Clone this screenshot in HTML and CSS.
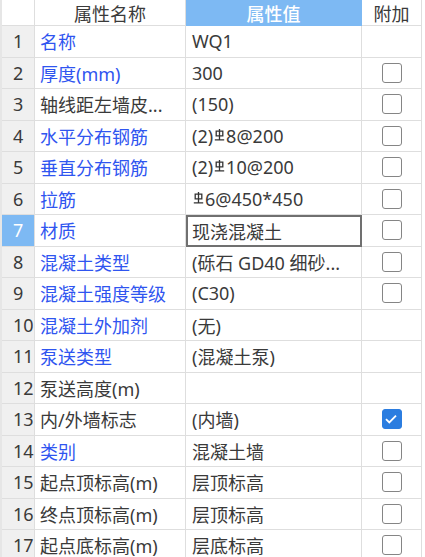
FILE: index.html
```html
<!DOCTYPE html>
<html lang="zh">
<head>
<meta charset="utf-8">
<title>属性</title>
<link rel="stylesheet" href="styles.css">
</head>
<body>
<div class="grid">
  <div class="h num-h"></div>
  <div class="h">属性名称</div>
  <div class="h val-h">属性值</div>
  <div class="h add-h">附加</div>

  <div class="n">1</div><div class="c blue">名称</div><div class="v">WQ1</div><div class="a"></div>
  <div class="n">2</div><div class="c blue">厚度(mm)</div><div class="v">300</div><div class="a"><span class="cb"></span></div>
  <div class="n">3</div><div class="c">轴线距左墙皮...</div><div class="v">(150)</div><div class="a"><span class="cb"></span></div>
  <div class="n">4</div><div class="c blue">水平分布钢筋</div><div class="v">(2)<svg class="bar" viewBox="0 0 11 12" width="11" height="12"><path d="M2.2 2.2h6.6v4.6H2.2zM5.5 0v10.5M0.8 10.8h9.4" fill="none" stroke="#333" stroke-width="1.3"/></svg>8@200</div><div class="a"><span class="cb"></span></div>
  <div class="n">5</div><div class="c blue">垂直分布钢筋</div><div class="v">(2)<svg class="bar" viewBox="0 0 11 12" width="11" height="12"><path d="M2.2 2.2h6.6v4.6H2.2zM5.5 0v10.5M0.8 10.8h9.4" fill="none" stroke="#333" stroke-width="1.3"/></svg>10@200</div><div class="a"><span class="cb"></span></div>
  <div class="n">6</div><div class="c blue">拉筋</div><div class="v"><svg class="bar" viewBox="0 0 11 12" width="11" height="12"><path d="M2.2 2.2h6.6v4.6H2.2zM5.5 0v10.5M0.8 10.8h9.4" fill="none" stroke="#333" stroke-width="1.3"/></svg>6@450*450</div><div class="a"><span class="cb"></span></div>
  <div class="n sel">7</div><div class="c blue">材质</div><div class="v edit">现浇混凝土</div><div class="a"><span class="cb"></span></div>
  <div class="n">8</div><div class="c blue">混凝土类型</div><div class="v">(砾石 GD40 细砂...</div><div class="a"><span class="cb"></span></div>
  <div class="n">9</div><div class="c blue">混凝土强度等级</div><div class="v">(C30)</div><div class="a"><span class="cb"></span></div>
  <div class="n">10</div><div class="c blue">混凝土外加剂</div><div class="v">(无)</div><div class="a"></div>
  <div class="n">11</div><div class="c blue">泵送类型</div><div class="v">(混凝土泵)</div><div class="a"></div>
  <div class="n">12</div><div class="c">泵送高度(m)</div><div class="v"></div><div class="a"></div>
  <div class="n">13</div><div class="c">内/外墙标志</div><div class="v">(内墙)</div><div class="a"><span class="cb on"><svg viewBox="0 0 20 20" width="20" height="20"><path d="M5 10.2l3.3 3.3L15 6.6" fill="none" stroke="#fff" stroke-width="1.8"/></svg></span></div>
  <div class="n">14</div><div class="c blue">类别</div><div class="v">混凝土墙</div><div class="a"><span class="cb"></span></div>
  <div class="n">15</div><div class="c">起点顶标高(m)</div><div class="v">层顶标高</div><div class="a"><span class="cb"></span></div>
  <div class="n">16</div><div class="c">终点顶标高(m)</div><div class="v">层顶标高</div><div class="a"><span class="cb"></span></div>
  <div class="n">17</div><div class="c">起点底标高(m)</div><div class="v">层底标高</div><div class="a"><span class="cb"></span></div>
</div>
</body>
</html>
```
FILE: styles.css
```css
html, body {
  margin: 0;
  padding: 0;
  background: #ffffff;
}
body {
  width: 425px;
  height: 557px;
  overflow: hidden;
  font-family: "Noto Sans", "Noto Sans CJK SC", sans-serif;
  font-size: 18px;
  color: #333333;
}
.grid {
  display: grid;
  grid-template-columns: 33px 151px 176px 60px;
  grid-template-rows: 26px;
  grid-auto-rows: 31.5px;
  width: 420px;
  border-left: 2px solid #e6e6e6;
}
.grid > div {
  box-sizing: border-box;
  border-right: 1px solid #dedede;
  border-bottom: 1px solid #dedede;
  display: flex;
  align-items: center;
  white-space: nowrap;
  overflow: hidden;
}
.h {
  justify-content: center;
  background: #ffffff;
  color: #3a3a3a;
}
.val-h {
  background: #7db9f3;
  color: #ffffff;
  font-weight: 500;
  border-right-color: #7db9f3 !important;
  border-bottom-color: #7db9f3 !important;
}
.n {
  background: #f0f0f0;
  padding-left: 11px;
  color: #3a3a3a;
}
.n.sel {
  background: #7db9f3;
  color: #ffffff;
}
.c {
  padding-left: 5px;
  color: #3a3a3a;
}
.c.blue {
  color: #2f55f0;
}
.v {
  padding-left: 6px;
  color: #3a3a3a;
}
.v.edit {
  border: 2px solid #707070 !important;
  padding-left: 4px;
}
.bar {
  display: inline-block;
  margin: 0 1px 0 1px;
  position: relative;
  top: -1px;
}
.a {
  justify-content: center;
}
.cb {
  box-sizing: border-box;
  width: 20px;
  height: 20px;
  border: 1.5px solid #858585;
  border-radius: 3px;
  display: block;
  background: #ffffff;
}
.cb.on {
  background: #2b7de0;
  border-color: #2b7de0;
  position: relative;
}
.cb.on svg {
  position: absolute;
  left: -1.5px;
  top: -1.5px;
}
```
